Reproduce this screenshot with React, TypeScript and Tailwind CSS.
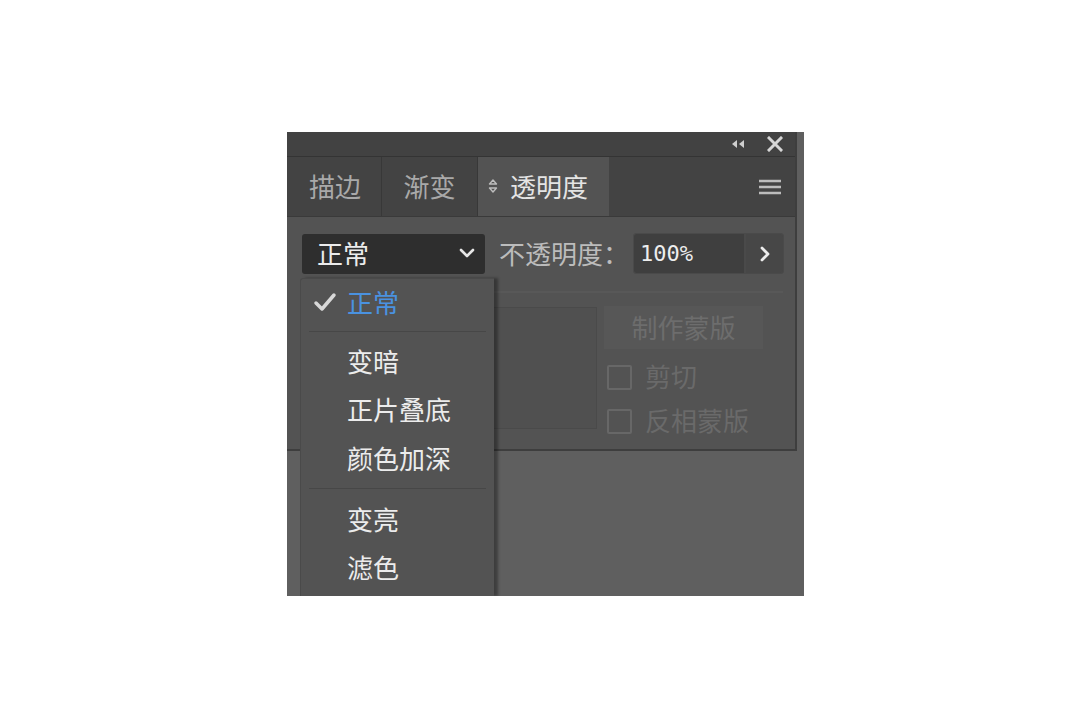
import React from "react";

const cjk = { fontFamily: '"Noto Sans CJK SC", "Noto Sans", sans-serif' };

function Check() {
  return (
    <svg width="24" height="20" viewBox="0 0 24 20">
      <path d="M3 11 L9 17 L21 3" fill="none" stroke="#d8d8d8" strokeWidth="3.5" strokeLinecap="round" strokeLinejoin="round" />
    </svg>
  );
}

export default function App() {
  return (
    <div className="w-full h-[713px] bg-white pt-[132px] pl-[287px]" style={cjk}>
      <div className="relative w-[517px] h-[464px] bg-[#5f5f5f] overflow-hidden">
        <div className="w-[510px] bg-[#535353] border-b-2 border-r-2 border-[#3e3e3e]">
          {/* title bar */}
          <div className="h-[25px] bg-[#424242] border-b border-[#343434] flex items-center justify-end pr-[12px] gap-[22px]">
            <svg width="14" height="10" viewBox="0 0 14 10">
              <path d="M6 1 L1 5 L6 9 Z M13 1 L8 5 L13 9 Z" fill="#cfcfcf" />
            </svg>
            <svg width="16" height="16" viewBox="0 0 16 16">
              <path d="M2 2 L14 14 M14 2 L2 14" stroke="#d6d6d6" strokeWidth="3" strokeLinecap="square" />
            </svg>
          </div>
          {/* tabs */}
          <div className="h-[60px] flex bg-[#434343] border-b border-[#3a3a3a]">
            <div className="w-[95px] flex items-center justify-center border-r border-[#383838] text-[26px] text-[#a9a9a9] pl-[2px] pb-[2px]">描边</div>
            <div className="w-[96px] flex items-center justify-center border-r border-[#383838] text-[26px] text-[#a9a9a9] pb-[2px]">渐变</div>
            <div className="w-[131px] bg-[#535353] flex items-center pl-[10px] gap-[12px] text-[26px] text-[#e4e4e4] pb-[2px]">
              <svg width="10" height="14" viewBox="0 0 10 14">
                <path d="M5 1 L8.5 5 L1.5 5 Z M5 13 L8.5 9 L1.5 9 Z" fill="none" stroke="#bdbdbd" strokeWidth="1.4" strokeLinejoin="round" />
              </svg>
              <span>透明度</span>
            </div>
            <div className="flex-1 flex items-center justify-end pr-[14px]">
              <svg width="22" height="16" viewBox="0 0 22 16">
                <path d="M0 2 H22 M0 8 H22 M0 14 H22" stroke="#bcbcbc" strokeWidth="2.5" />
              </svg>
            </div>
          </div>
          {/* body */}
          <div className="h-[232px] pl-[15px] pt-[16px]">
            <div className="flex items-center">
              <div className="w-[183px] h-[40px] bg-[#2e2e2e] rounded-[3px] flex items-center justify-between pl-[15px] pr-[10px] pb-[2px] text-[26px] text-[#ececec]">
                <span>正常</span>
                <svg width="16" height="12" viewBox="0 0 16 12">
                  <path d="M2 3 L8 9 L14 3" fill="none" stroke="#e6e6e6" strokeWidth="2.6" strokeLinecap="round" strokeLinejoin="round" />
                </svg>
              </div>
              <span className="ml-[14px] text-[26px] text-[#bcbcbc] pb-[2px]">不透明度：</span>
              <div className="ml-[4px] flex items-stretch h-[41px] rounded-[3px] border border-[#4a4a4a] bg-[#4a4a4a]">
                <div className="w-[110px] bg-[#3f3f3f] rounded-l-[3px] flex items-center pl-[6px] text-[22px] text-[#ededed]" style={{ fontFamily: '"DejaVu Sans Mono", monospace' }}>100%</div>
                <div className="w-[37px] ml-[2px] bg-[#474747] rounded-r-[3px] flex items-center justify-center">
                  <svg width="12" height="16" viewBox="0 0 12 16">
                    <path d="M3 2 L9 8 L3 14" fill="none" stroke="#ececec" strokeWidth="2.8" strokeLinecap="round" strokeLinejoin="round" />
                  </svg>
                </div>
              </div>
            </div>
            <div className="mt-[17px] ml-[190px] mr-[12px] h-[2px] bg-[#585858]" />
            <div className="flex mt-[14px]">
              <div className="w-[104px] h-[122px] ml-[191px] border border-[#4a4a4a] bg-[#505050]" />
              <div className="ml-[7px] flex flex-col">
                <div className="w-[159px] h-[43px] bg-[#575757] flex items-center justify-center text-[26px] text-[#6d6d6d] -mt-[1px] pb-[3px]">制作蒙版</div>
                <div className="flex items-center h-[25px] mt-[16px] ml-[3px] leading-none">
                  <div className="w-[25px] h-[25px] border-2 border-[#676767] rounded-[2px]" />
                  <span className="ml-[13px] text-[26px] text-[#6a6a6a] -mt-[3px]">剪切</span>
                </div>
                <div className="flex items-center h-[25px] mt-[19px] ml-[3px] leading-none">
                  <div className="w-[25px] h-[25px] border-2 border-[#676767] rounded-[2px]" />
                  <span className="ml-[13px] text-[26px] text-[#6a6a6a] -mt-[3px]">反相蒙版</span>
                </div>
              </div>
            </div>
          </div>
        </div>
        {/* dropdown menu */}
        <div className="absolute left-[13px] top-[146px] w-[194px] bottom-0 bg-[#535353] border-l border-t border-[#4a4a4a] rounded-tl-[3px] shadow-[4px_0_3px_rgba(0,0,0,0.35)] pt-[2px]">
          <div className="h-[40px] flex items-center text-[26px]">
            <div className="w-[46px] flex justify-center pl-[2px] pt-[2px]"><Check /></div>
            <span className="text-[#4a92e0]">正常</span>
          </div>
          <div className="mx-[8px] mt-[10px] mb-[4px] h-[1px] bg-[#474747]" />
          <div className="flex flex-col pl-[46px] text-[26px] text-[#ececec]">
            <div className="h-[48px] flex items-center">变暗</div>
            <div className="h-[49px] flex items-center">正片叠底</div>
            <div className="h-[48px] flex items-center">颜色加深</div>
          </div>
          <div className="mx-[8px] mt-[7px] mb-[5px] h-[1px] bg-[#474747]" />
          <div className="flex flex-col pl-[46px] text-[26px] text-[#ececec]">
            <div className="h-[48px] flex items-center">变亮</div>
            <div className="h-[48px] flex items-center">滤色</div>
          </div>
        </div>
      </div>
    </div>
  );
}
